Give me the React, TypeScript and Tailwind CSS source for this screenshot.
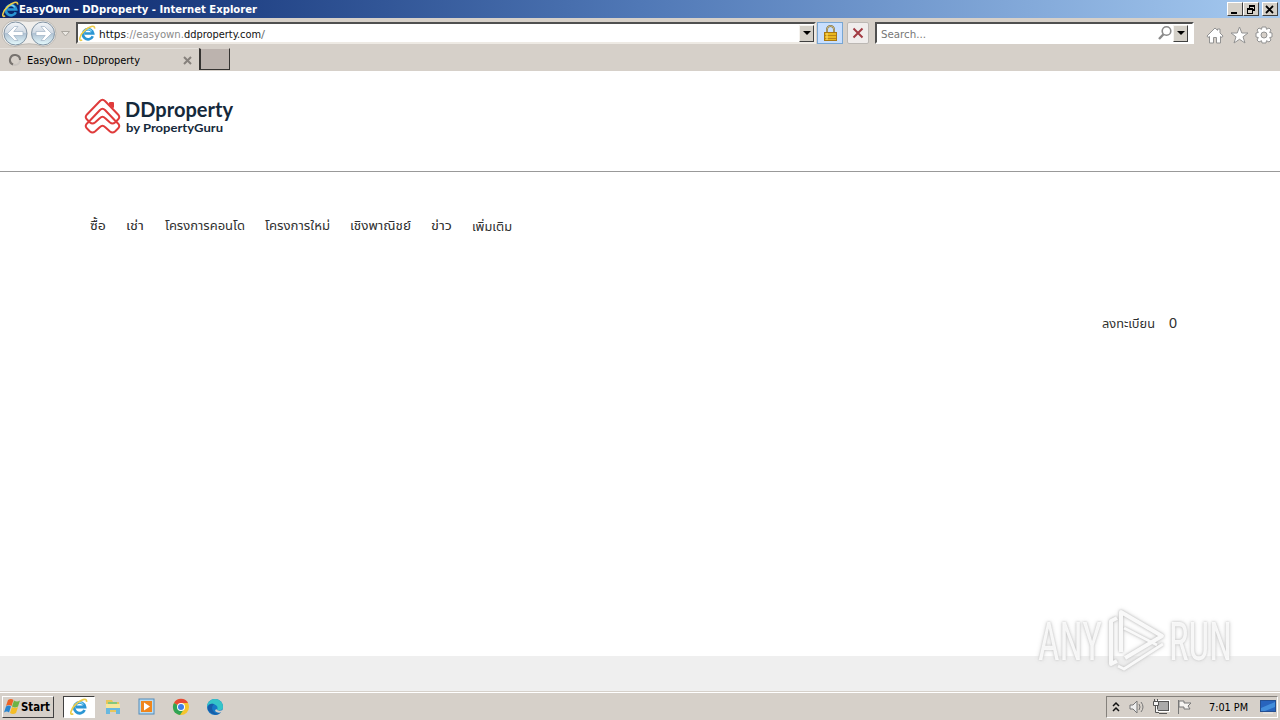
import type { ReactNode } from "react";

const uiFont = "font-['DejaVu_Sans_Condensed','DejaVu_Sans',sans-serif] [font-stretch:condensed]";

const menu = [
  { label: "ซื้อ", cls: "w-[16px] mr-[20px]", width: 16 },
  { label: "เช่า", cls: "w-[18px] mr-[21px]", width: 18 },
  { label: "โครงการคอนโด", cls: "w-[80px] mr-[20px]", width: 80 },
  { label: "โครงการใหม่", cls: "w-[65px] mr-[20px]", width: 65 },
  { label: "เชิงพาณิชย์", cls: "w-[61px] mr-[20px]", width: 61 },
  { label: "ข่าว", cls: "w-[21px] mr-[20px]", width: 21 },
  { label: "เพิ่มเติม", cls: "w-[41px] mt-px", width: 40 },
];

interface LabelProps {
  text: string;
  width: number;
  size?: number;
  height?: number;
  className?: string;
}

// Single line label fitted to a fixed width
function Label({ text, width, size = 11, height = 16, className = "" }: LabelProps) {
  return (
    <svg width={width} height={height} className={`shrink-0 overflow-visible ${className}`}>
      <text x="0" y={height - 4} fontSize={size} textLength={width} lengthAdjust="spacingAndGlyphs" fill="currentColor">
        {text}
      </text>
    </svg>
  );
}

function IeIcon({ size = 17 }: { size?: number }) {
  return (
    <svg width={size} height={size} viewBox="0 0 18 18" className="shrink-0" fill="none">
      <path d="M14.6 12A5.4 5.4 0 1 1 15 9H6" stroke="#2b96d4" strokeWidth="2.8" />
      <path d="M4.6 8A5 5 0 0 1 13.5 6.6" stroke="#7fd3f5" strokeWidth="1.2" />
      <path d="M3.3 15.8C-1 18 .5 11 6 6C10.5 1.7 17 -.8 16.5 3.8" stroke="#eccb4a" strokeWidth="1.7" />
    </svg>
  );
}

function WindowButton({ children }: { children: ReactNode }) {
  return (
    <button className="flex h-[14px] w-[16px] items-center justify-center border border-t-white border-l-white border-r-[#404040] border-b-[#404040] bg-[#d4d0c8]">
      <svg width="12" height="11" fill="none" stroke="#000" shapeRendering="crispEdges">{children}</svg>
    </button>
  );
}

function TitleBar() {
  return (
    <div className="flex h-[18px] items-center bg-gradient-to-r from-[#0a246a] via-[#5078b6] via-50% to-[#a6caf0] pl-[2px] pr-[2px] text-white">
      <IeIcon />
      <Label text="EasyOwn – DDproperty - Internet Explorer" width={238} className="font-bold" />
      <div className="ml-auto flex">
        <WindowButton><path d="M2 9H8" strokeWidth="2" /></WindowButton>
        <WindowButton><path d="M4 2H10M4.5 1V4M9.5 2V6H8M2 5H8M2.5 5V9.5H7.5V5" strokeWidth="1.4" /></WindowButton>
        <div className="w-[3px]" />
        <WindowButton><path d="M2 2L9 9M9 2L2 9" strokeWidth="1.8" shapeRendering="auto" /></WindowButton>
      </div>
    </div>
  );
}

function DropButton() {
  return (
    <div className="flex h-[17px] w-[15px] shrink-0 items-center justify-center border border-t-[#f5f3ef] border-l-[#f5f3ef] border-r-[#404040] border-b-[#404040] bg-[#d4d0c8]">
      <svg width="8" height="4"><path d="M0 0H8L4 4Z" /></svg>
    </div>
  );
}

function NavButtons() {
  return (
    <svg width="76" height="30" className="shrink-0">
      <defs>
        <linearGradient id="glass" x1="0" y1="0" x2="0" y2="1">
          <stop offset="0" stopColor="#f3f6f9" />
          <stop offset=".49" stopColor="#cfd8e2" />
          <stop offset=".5" stopColor="#b0c2d3" />
          <stop offset="1" stopColor="#e5fafd" />
        </linearGradient>
      </defs>
      <path d="M15 2.5Q29 4 43 2.5A13 13 0 0 1 43 28.5Q29 23 15 28.5A13 13 0 0 1 15 2.5Z" fill="#f0eeeb" stroke="#bcb8b2" />
      <g fill="url(#glass)" stroke="#8193a3">
        <circle cx="15.5" cy="15.5" r="11.5" />
        <circle cx="43" cy="15.5" r="11.5" />
      </g>
      <g fill="#fff" stroke="#9fb2c4" strokeWidth=".7">
        <path d="M7.5 15.5L14.5 8.5H18L13.8 13.5H23V17.5H13.8L18 22.5H14.5Z" />
        <path d="M51.5 15.5L44.5 8.5H41L45.2 13.5H36V17.5H45.2L41 22.5H44.5Z" />
      </g>
      <path d="M61.5 13.5H69.5L65.5 18Z" fill="#ebe8e3" stroke="#aaa69f" />
    </svg>
  );
}

function LockIcon() {
  return (
    <svg width="15" height="17" viewBox="0 0 15 17">
      <path d="M4 8V4.5A3.5 3.5 0 0 1 11 4.5V8" fill="none" stroke="#827346" strokeWidth="2" />
      <path d="M4 8V4.5A3.5 3.5 0 0 1 11 4.5V8" fill="none" stroke="#e5d59b" strokeWidth=".7" />
      <rect x="1.5" y="7.5" width="12" height="8" fill="#e9b81f" stroke="#a97813" />
      <path d="M2 10.5H13M2 13.5H13" stroke="#bb8519" />
      <path d="M4 8V15" stroke="#ffe275" />
    </svg>
  );
}

function ToolIcons() {
  return (
    <svg width="69" height="20" className="mt-[3px] ml-auto overflow-visible" fill="#fff" stroke="#929292" strokeLinejoin="round">
      <path d="M1 11L9 3L11.5 5.3V4H14V8L17 11L16 12.5L14.5 11.5V18H10.5V12.5H7.5V18H3.5V11.5L2 12.5Z" />
      <path d="M33.5 2L35.8 8H42L37 11.8L39 18L33.5 14.3L28 18L30 11.8L25 8H31.2Z" />
      <path d="M56 2H60L60.5 4.3L63 3L65 5L63.7 7.5L66 8V12L63.7 12.5L65 15L63 17L60.5 15.7L60 18H56L55.5 15.7L53 17L51 15L52.3 12.5L50 12V8L52.3 7.5L51 5L53 3L55.5 4.3Z" />
      <circle cx="58" cy="10" r="3" fill="#d6d0c9" />
    </svg>
  );
}

function ToolBar() {
  return (
    <div className="flex h-[30px] items-center bg-[#d6d0c9] pr-[5px]">
      <NavButtons />
      <div className="flex h-[22px] w-[740px] shrink-0 items-center border-2 border-t-[#505050] border-l-[#505050] border-r-[#eeeae4] border-b-[#eeeae4] bg-white">
        <div className="w-px" />
        <IeIcon />
        <div className="ml-[3px] mt-px flex text-[#111]">
          <Label text="https" width={27} />
          <Label text="://easyown." width={58} className="text-[#8b8b8b]" />
          <Label text="ddproperty.com" width={77} />
          <Label text="/" width={4} className="text-[#777]" />
        </div>
        <div className="ml-auto"><DropButton /></div>
      </div>
      <div className="ml-px flex h-[22px] w-[26px] shrink-0 items-center justify-center border border-[#78a6d3] bg-[#c8dfff]">
        <LockIcon />
      </div>
      <div className="ml-[4px] flex h-[22px] w-[22px] shrink-0 items-center justify-center rounded-[2px] border border-[#bcb8b4] bg-[#f0edec]">
        <svg width="12" height="12"><path d="M1.5 1.5L10.5 10.5M10.5 1.5L1.5 10.5" stroke="#a23b43" strokeWidth="2" /></svg>
      </div>
      <div className="ml-[6px] flex h-[22px] w-[319px] shrink-0 items-center border-2 border-t-[#505050] border-l-[#505050] border-r-white border-b-white bg-white pl-[4px] pr-[4px]">
        <Label text="Search..." width={45} className="mt-px text-[#777]" />
        <svg width="15" height="16" className="ml-auto" fill="none" stroke="#8a8a8a">
          <circle cx="8.5" cy="6" r="4.3" strokeWidth="1.6" />
          <path d="M5.5 9.2L1 14" strokeWidth="2.4" />
        </svg>
        <DropButton />
      </div>
      <ToolIcons />
    </div>
  );
}

function TabBar() {
  return (
    <div className="flex h-[23px] bg-[#d6d0c9]">
      <div className="flex w-[198px] items-center border-t border-[#e5e1dc] pl-[8px]">
        <svg width="14" height="14" fill="none">
          <circle cx="7" cy="7" r="5" stroke="#c9c4bf" strokeWidth="2" />
          <path d="M5 11.5A5 5 0 1 1 12 7" stroke="#77736f" strokeWidth="2" />
        </svg>
        <Label text="EasyOwn – DDproperty" width={113} className="ml-[5px] text-black" />
        <svg width="9" height="9" className="ml-auto mr-[6px]"><path d="M1 1L8 8M8 1L1 8" stroke="#86817c" strokeWidth="2" /></svg>
      </div>
      <div className="ml-px h-[22px] w-[31px] border border-t-[#d6d0c9] border-l-2 border-[#353331] bg-[#bcb3ae]" />
    </div>
  );
}

function Logo() {
  return (
    <div className="flex text-[#15293b]">
      <svg width="37" height="37" viewBox="0 0 37 37" fill="none" stroke="#df3b3b" strokeWidth="2" strokeLinejoin="round" strokeLinecap="round">
        <path d="M2.5 17L16 3Q18.5 .5 21 3L34.5 17Q36 19 34.5 21L31 24.5Q28.5 26.5 26 24.5L21 20Q18.5 17.5 16 20L11 24.5Q8.5 26.5 6 24.5L2.5 21Q1 19 2.5 17Z" />
        <path d="M6 22.5L16 12Q18.5 9.5 21 12L31 22.5L34.5 26Q36 28 34.5 30L31 33.5Q28.5 35.5 26 33.5L21 29Q18.5 26.5 16 29L11 33.5Q8.5 35.5 6 33.5L2.5 30Q1 28 2.5 26Z" />
        <path d="M26 6V5H29V9Z" fill="#df3b3b" />
      </svg>
      <div className="ml-[4px] flex flex-col pt-px font-['Lato',sans-serif] font-bold">
        <Label text="DDproperty" size={21} width={108} height={22} />
        <Label text="by PropertyGuru" size={12} width={97} height={15} className="ml-px" />
      </div>
    </div>
  );
}

// Translucent watermark over the page bottom
function Watermark() {
  return (
    <svg width="240" height="90" className="absolute left-[1030px] top-[602px] overflow-visible [filter:drop-shadow(0_0_1px_#bbb)_drop-shadow(0_0_2px_#ddd)]">
      <g fill="#fff" fillOpacity=".85" fontSize="53" className="font-['Roboto',sans-serif]">
        <text x="8" y="58" textLength="64" lengthAdjust="spacingAndGlyphs">ANY</text>
        <text x="139" y="58" textLength="63" lengthAdjust="spacingAndGlyphs">RUN</text>
      </g>
      <g fill="none" stroke="#f9f9f9" strokeWidth="4" strokeLinejoin="round">
        <path d="M91 50V10L132 34L95 56" />
        <path d="M87 16L81 19V62L87 59" />
        <path d="M133 42L94 67L88 64M94 26L127 43" strokeWidth="3" />
      </g>
    </svg>
  );
}

function Page() {
  return (
    <main className="h-[621px] bg-white font-['Noto_Sans_Thai','Noto_Sans',sans-serif] text-[#303030]">
      <header className="h-[101px] border-b border-[#999] pl-[84px] pt-[27px]">
        <Logo />
      </header>
      <nav className="flex items-start pl-[90px] pt-[46px]">
        {menu.map((item) => (
          <a key={item.label} className={`block shrink-0 ${item.cls}`}>
            <Label text={item.label} size={13} width={item.width} />
          </a>
        ))}
      </nav>
      <div className="mt-[81px] flex justify-end pr-[103px]">
        <Label text="ลงทะเบียน" size={13} width={53} />
        <Label text="0" size={14} width={8} className="ml-[14px] font-['Liberation_Sans',sans-serif]" />
      </div>
      <div className="mt-[324px] h-[36px] bg-[#efefef]" />
    </main>
  );
}

function TaskBar() {
  return (
    <footer className="flex h-[28px] items-center border-t border-white bg-[#d6d0c9] pl-[2px] pr-[2px] shadow-[0_-1px_0_#d6d0c9]">
      <button className="flex h-[22px] w-[52px] items-center border border-t-white border-l-white border-r-[#404040] border-b-[#404040] pl-px">
        <svg width="17" height="17">
          <path d="M4 2Q7 0 9.5 2L7.5 8Q5 6 2 8Z" fill="#ed6325" />
          <path d="M10 2.5Q13 4.5 16 2.5L14 8.5Q11 10.5 8 8.5Z" fill="#6cb445" />
          <path d="M2 8.5Q5 6.5 7 8.5L5 14.5Q3 12.5 0 14.5Z" fill="#2885d0" />
          <path d="M8 9Q11 11 14 9L12 15Q9 17 6 15Z" fill="#f4bd25" />
        </svg>
        <Label text="Start" size={12} width={29} className="font-bold text-black" />
      </button>
      <div className="ml-[9px] flex h-[22px] w-[32px] items-center justify-center border border-t-[#404040] border-l-[#404040] border-r-white border-b-white bg-white">
        <IeIcon size={18} />
      </div>
      <svg width="16" height="18" className="ml-[10px]">
        <path d="M1 2H7L8 4H14V14H1Z" fill="#e7c65a" />
        <path d="M3 4H12V7H3Z" fill="#85c77c" />
        <path d="M1 9H15V16H11V12H5V16H1Z" fill="#68b8df" />
        <path d="M1 6H15V10H1Z" fill="#f6e69b" />
      </svg>
      <svg width="17" height="18" className="ml-[17px]">
        <rect x="1" y="1" width="15" height="15" fill="#b9dcf1" stroke="#528bbb" />
        <rect x="3" y="3" width="11" height="11" fill="#ef861d" />
        <path d="M6 4.5L12 8.5L6 12.5Z" fill="#fff" />
      </svg>
      <svg width="18" height="18" className="ml-[17px]" viewBox="0 0 18 18">
        <circle cx="9" cy="9" r="8" fill="#f5c52d" />
        <path d="M9 9L2 5A8 8 0 0 1 16 5H9Z" fill="#e84a35" />
        <path d="M9 9L2 5A8 8 0 0 0 8 17L12 11Z" fill="#30a455" />
        <circle cx="9" cy="9" r="4" fill="#fff" />
        <circle cx="9" cy="9" r="3" fill="#3f7ee8" />
      </svg>
      <svg width="18" height="18" className="ml-[16px]" viewBox="0 0 18 18">
        <circle cx="9" cy="9" r="8" fill="#1679c6" />
        <path d="M1 9A8 8 0 0 1 17 9Q17 13 11 12Q13 8 8 6Q3 5 1 9Z" fill="#35c5c8" />
        <path d="M8 6Q4 10 8 14Q11 17 15 14Q12 18 7 16Q-1 12 3 7Q5 5 8 6Z" fill="#175da8" />
        <path d="M10 11Q12 14 17 12L16 14Q12 16 9 13Z" fill="#d6d0c9" />
      </svg>
      <div className="ml-auto flex h-[22px] w-[172px] items-center border border-t-[#85817c] border-l-[#85817c] border-r-white border-b-white pl-[5px]">
        <svg width="8" height="12" fill="none" stroke="#111" strokeWidth="1.5"><path d="M1 5L4 2L7 5M1 10L4 7L7 10" /></svg>
        <svg width="17" height="16" className="ml-[9px]" fill="#eee" stroke="#777">
          <path d="M1 6H4L8 2V14L4 10H1Z" />
          <path d="M10 5Q12 8 10 11M12 3Q16 8 12 13" fill="none" />
        </svg>
        <svg width="18" height="17" className="ml-[6px]" fill="#f5f5f5" stroke="#555">
          <rect x="5.5" y="3.5" width="11" height="9" fill="#aaa" stroke="#fff" strokeWidth="3" />
          <rect x="5.5" y="3.5" width="11" height="9" fill="#aaa" />
          <path d="M7 15.5H15M2.5 1V4M5.5 1V4M1.5 3.5H6.5V7.5H1.5ZM3.5 7.5V14.5H7" />
        </svg>
        <svg width="17" height="17" className="ml-[6px]" fill="#f6f4f1" stroke="#777">
          <path d="M2.5 2V16M3 3H8V5H15L12 8L14 11H8V9H3Z" />
        </svg>
        <Label text="7:01 PM" width={39} className="ml-[16px] text-black" />
        <svg width="16" height="15" className="ml-[12px]">
          <rect x=".5" y="1.5" width="15" height="11" fill="#2864bd" stroke="#244f91" />
          <path d="M1 9L15 3V8L5 12H1Z" fill="#438edb" />
          <path d="M3 14H13" stroke="#eee" />
        </svg>
      </div>
    </footer>
  );
}

function App() {
  return (
    <div className={`relative flex h-[720px] w-[1280px] flex-col overflow-hidden bg-white ${uiFont}`}>
      <TitleBar />
      <ToolBar />
      <TabBar />
      <Page />
      <TaskBar />
      <Watermark />
    </div>
  );
}

export default App;
